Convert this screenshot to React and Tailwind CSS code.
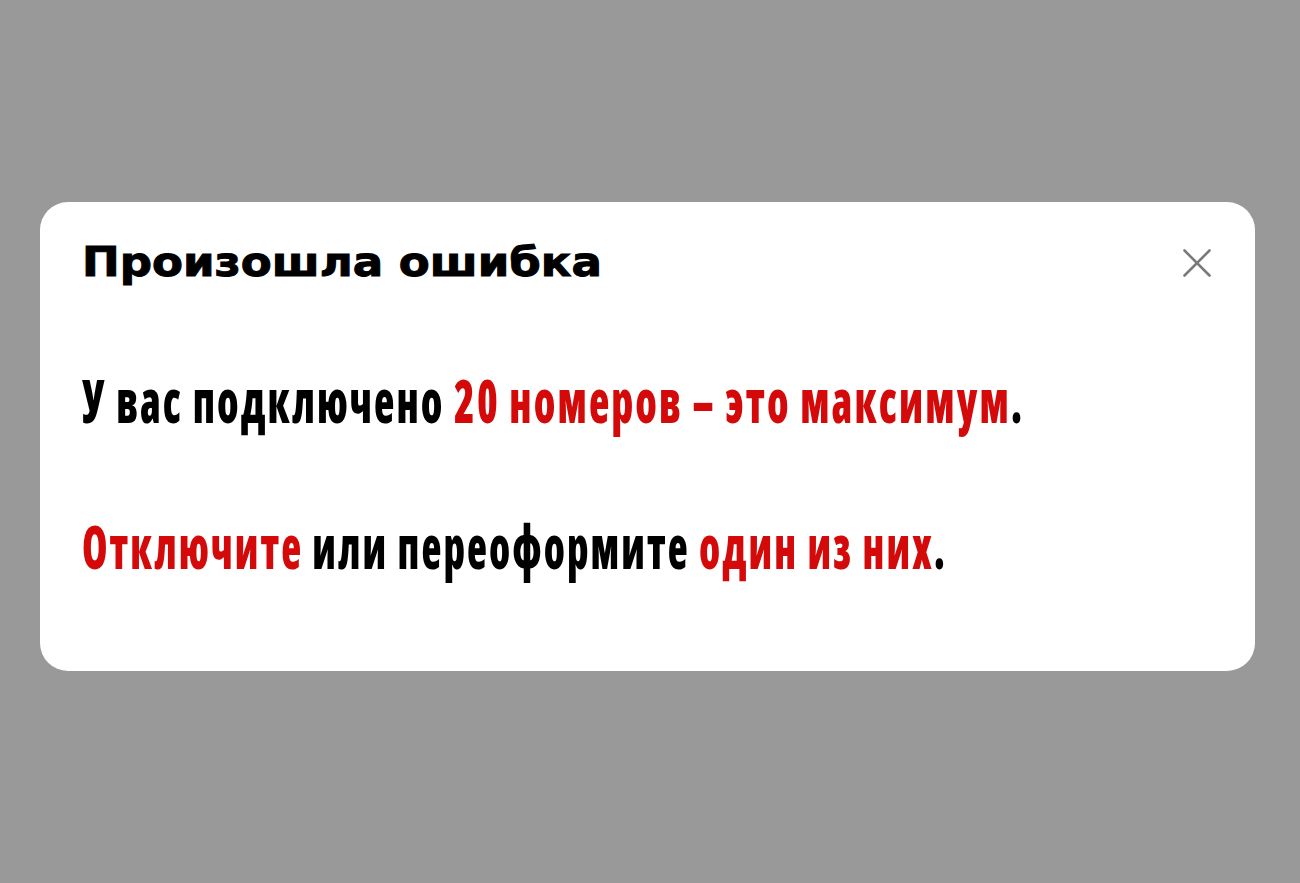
// Error dialog: "too many numbers connected"
function CloseIcon() {
  return (
    <svg width="32" height="32" viewBox="0 0 32 32" fill="none" aria-hidden="true">
      <path d="M3.5 3.5 L28.5 28.5 M28.5 3.5 L3.5 28.5" stroke="#7a7a7a" strokeWidth="2.6" strokeLinecap="round" />
    </svg>
  );
}

export default function App() {
  return (
    <div className="min-h-[883px] w-full bg-[#999999] pl-[40px] pt-[202px]">
      <div className="w-[1215px] h-[469px] rounded-[28px] bg-white px-[42px] pt-[40px]">
        <div className="flex items-center justify-between h-[41px]">
          <h1 className="font-['DejaVu_Sans'] font-bold text-[41px] leading-none text-black whitespace-nowrap origin-left scale-x-[1.1] [-webkit-text-stroke:1px_black]">
            Произошла ошибка
          </h1>
          <button type="button" className="w-8 h-8 flex items-center justify-center" aria-label="Закрыть">
            <CloseIcon />
          </button>
        </div>

        <div className="mt-[81px] flex flex-col gap-[73px] font-['Open_Sans'] [font-stretch:75%] font-extrabold text-[60px] leading-[73px] tracking-[3px] text-black">
          <p className="whitespace-nowrap origin-left scale-x-[0.7]">
            У вас подключено <span className="text-[#d40a0a]">20 номеров – это максимум</span>.
          </p>
          <p className="whitespace-nowrap origin-left scale-x-[0.686]">
            <span className="text-[#d40a0a]">Отключите</span> или переоформите{" "}
            <span className="text-[#d40a0a]">один из них</span>.
          </p>
        </div>
      </div>
    </div>
  );
}
